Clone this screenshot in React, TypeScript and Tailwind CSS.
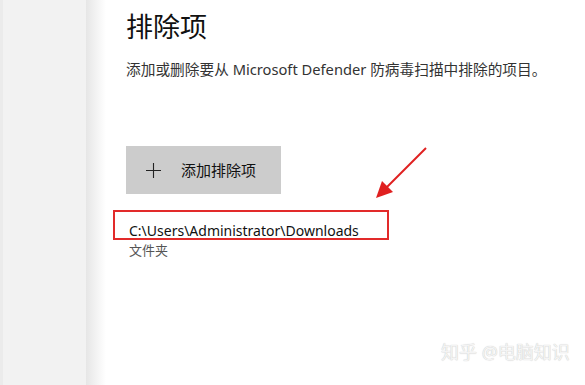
import React from "react";

export default function App() {
  return (
    <div
      className="relative flex h-[385px] w-[585px] overflow-hidden bg-white"
      style={{ fontFamily: '"Noto Sans", "Noto Sans CJK SC", sans-serif' }}
    >
      <div className="flex h-full w-[86px] shrink-0 bg-[#f2f2f2]">
        <div className="h-full w-[3px] bg-[#ebebeb]" />
      </div>
      <div className="h-full w-[20px] shrink-0 bg-gradient-to-r from-[#e6e6e6] to-white" />
      <div className="flex flex-col pl-[20px]">
        <h1 className="mt-[9px] text-[27px] leading-[36px] text-[#111]">排除项</h1>
        <p className="mt-[14px] whitespace-nowrap text-[14.7px] leading-[20px] text-[#333]">
          添加或删除要从 Microsoft Defender 防病毒扫描中排除的项目。
        </p>
        <button className="mt-[67px] flex h-[48px] w-[155px] items-center bg-[#cccccc] pl-[20px] text-[#111]">
          <svg width="15" height="15" viewBox="0 0 15 15">
            <path d="M7.5 0 V15 M0 7.5 H15" stroke="#222" strokeWidth="1.1" fill="none" />
          </svg>
          <span className="ml-[20px] text-[15px] leading-none">添加排除项</span>
        </button>
        <div className="mt-[16px] -ml-[13px] h-[30px] w-[276px] border-2 border-[#e22a2a]" />
        <div className="-mt-[19px] ml-[3px] whitespace-nowrap text-[14px] leading-[20px] text-[#111]">
          C:\Users\Administrator\Downloads
        </div>
        <div className="ml-[3px] text-[13px] leading-[18px] text-[#555]">文件夹</div>
      </div>
      <svg className="absolute left-0 top-0" width="585" height="385">
        <line x1="426" y1="148" x2="387" y2="187" stroke="#e02020" strokeWidth="2" />
        <polygon points="376,198 382,181 393,192" fill="#e02020" />
      </svg>
      <div
        className="absolute left-[441px] top-[339px] whitespace-nowrap text-[18px] text-[#f4f4f4]"
        style={{ textShadow: "0 0 1px #b8b8b8" }}
      >
        知乎 @电脑知识
      </div>
    </div>
  );
}
